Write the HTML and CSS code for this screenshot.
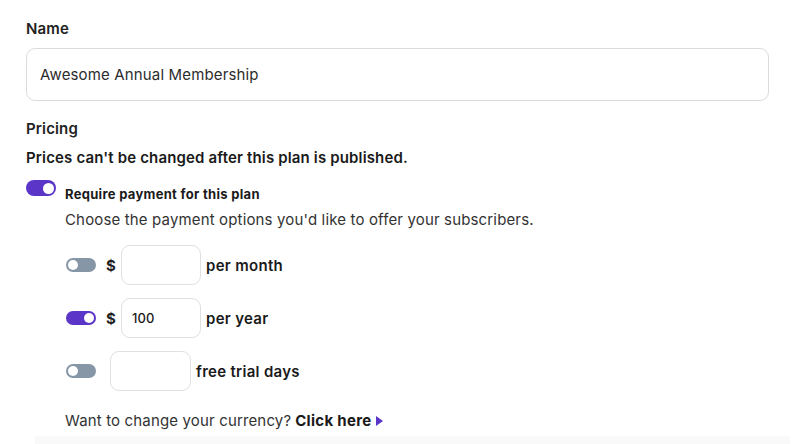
FILE: index.html
```html
<!DOCTYPE html>
<html>
<head>
<meta charset="utf-8">
<link rel="stylesheet" href="styles.css">
</head>
<body>
<div class="form">
  <label class="label">Name</label>
  <div class="text-input">Awesome Annual Membership</div>
  <div class="label pricing">Pricing</div>
  <div class="warning">Prices can't be changed after this plan is published.</div>
  <div class="require">
    <span class="toggle on big"><span class="knob"></span></span>
    <span class="require-text">Require payment for this plan</span>
  </div>
  <div class="options">
    <div class="hint">Choose the payment options you'd like to offer your subscribers.</div>
    <div class="row">
      <span class="toggle off"><span class="knob"></span></span>
      <span class="dollar">$</span>
      <span class="box"></span>
      <span class="unit">per month</span>
    </div>
    <div class="row">
      <span class="toggle on"><span class="knob"></span></span>
      <span class="dollar">$</span>
      <span class="box">100</span>
      <span class="unit">per year</span>
    </div>
    <div class="row trial">
      <span class="toggle off"><span class="knob"></span></span>
      <span class="box"></span>
      <span class="unit">free trial days</span>
    </div>
    <div class="currency">Want to change your currency? <b>Click here</b><span class="arrow"></span></div>
  </div>
</div>
<div class="footer-band"></div>
</body>
</html>
```
FILE: styles.css
```css
html, body {
  margin: 0;
  padding: 0;
  background: #fff;
  overflow: hidden;
}
body {
  font-family: Inter, "Noto Sans", sans-serif;
  color: #1f1f23;
  width: 800px;
  height: 444px;
  position: relative;
  letter-spacing: 0.15px;
}
.form {
  padding: 20px 31px 0 26px;
  display: flex;
  flex-direction: column;
}
.label {
  font-size: 15px;
  font-weight: 600;
  line-height: 18px;
  color: #222;
}
.text-input {
  margin-top: 10px;
  height: 51px;
  border: 1px solid #dcdcdc;
  border-radius: 9px;
  padding: 0 13px;
  display: flex;
  align-items: center;
  font-size: 15px;
  color: #2c2c2c;
}
.pricing {
  margin-top: 19px;
}
.warning {
  margin-top: 11px;
  font-size: 15px;
  font-weight: 600;
  line-height: 18px;
  color: #1a1a1a;
}
.require {
  margin-top: 13px;
  display: flex;
  align-items: flex-start;
  gap: 9px;
}
.require-text {
  font-size: 13px;
  font-weight: 700;
  line-height: 16px;
  margin-top: 6px;
  color: #1a1a1a;
  letter-spacing: 0.3px;
}
.toggle {
  display: inline-flex;
  align-items: center;
  justify-content: flex-start;
  width: 30px;
  height: 14px;
  border-radius: 8px;
  background: #8696a7;
  padding: 0 2px;
  box-sizing: border-box;
  flex: none;
}
.toggle.on {
  background: #5a35c8;
  justify-content: flex-end;
}
.toggle.big {
  height: 16px;
}
.knob {
  width: 10px;
  height: 10px;
  border-radius: 50%;
  background: #fff;
}
.toggle.big .knob {
  width: 11px;
  height: 11px;
}
.options {
  padding-left: 39px;
  display: flex;
  flex-direction: column;
}
.hint {
  margin-top: 9px;
  font-size: 15px;
  line-height: 18px;
  color: #333;
}
.row {
  display: flex;
  align-items: center;
  margin-top: 16px;
  height: 40px;
}
.row + .row {
  margin-top: 13px;
}
.row .toggle {
  margin-left: 1px;
}
.dollar {
  font-size: 15px;
  font-weight: 700;
  margin-left: 10px;
  width: 15px;
}
.box {
  width: 80px;
  height: 40px;
  box-sizing: border-box;
  border: 1px solid #e0e0e0;
  border-radius: 9px;
  display: flex;
  align-items: center;
  padding-left: 10px;
  font-size: 13px;
  font-weight: 500;
  color: #1a1a1a;
}
.trial .box {
  margin-left: 14px;
  width: 81px;
}
.unit {
  margin-left: 5px;
  font-size: 15px;
  font-weight: 600;
  color: #1a1a1a;
  letter-spacing: 0.3px;
}
.currency {
  margin-top: 21px;
  font-size: 15px;
  line-height: 18px;
  color: #333;
  display: flex;
  align-items: center;
}
.currency b {
  margin-left: 4px;
  font-weight: 700;
  color: #1a1a1a;
  letter-spacing: 0.3px;
}
.arrow {
  margin-left: 5px;
  width: 0;
  height: 0;
  border-top: 5px solid transparent;
  border-bottom: 5px solid transparent;
  border-left: 7px solid #5a35c8;
}
.footer-band {
  position: absolute;
  left: 35px;
  right: 10px;
  top: 436px;
  bottom: 0;
  background: #f9f9f9;
}
```
